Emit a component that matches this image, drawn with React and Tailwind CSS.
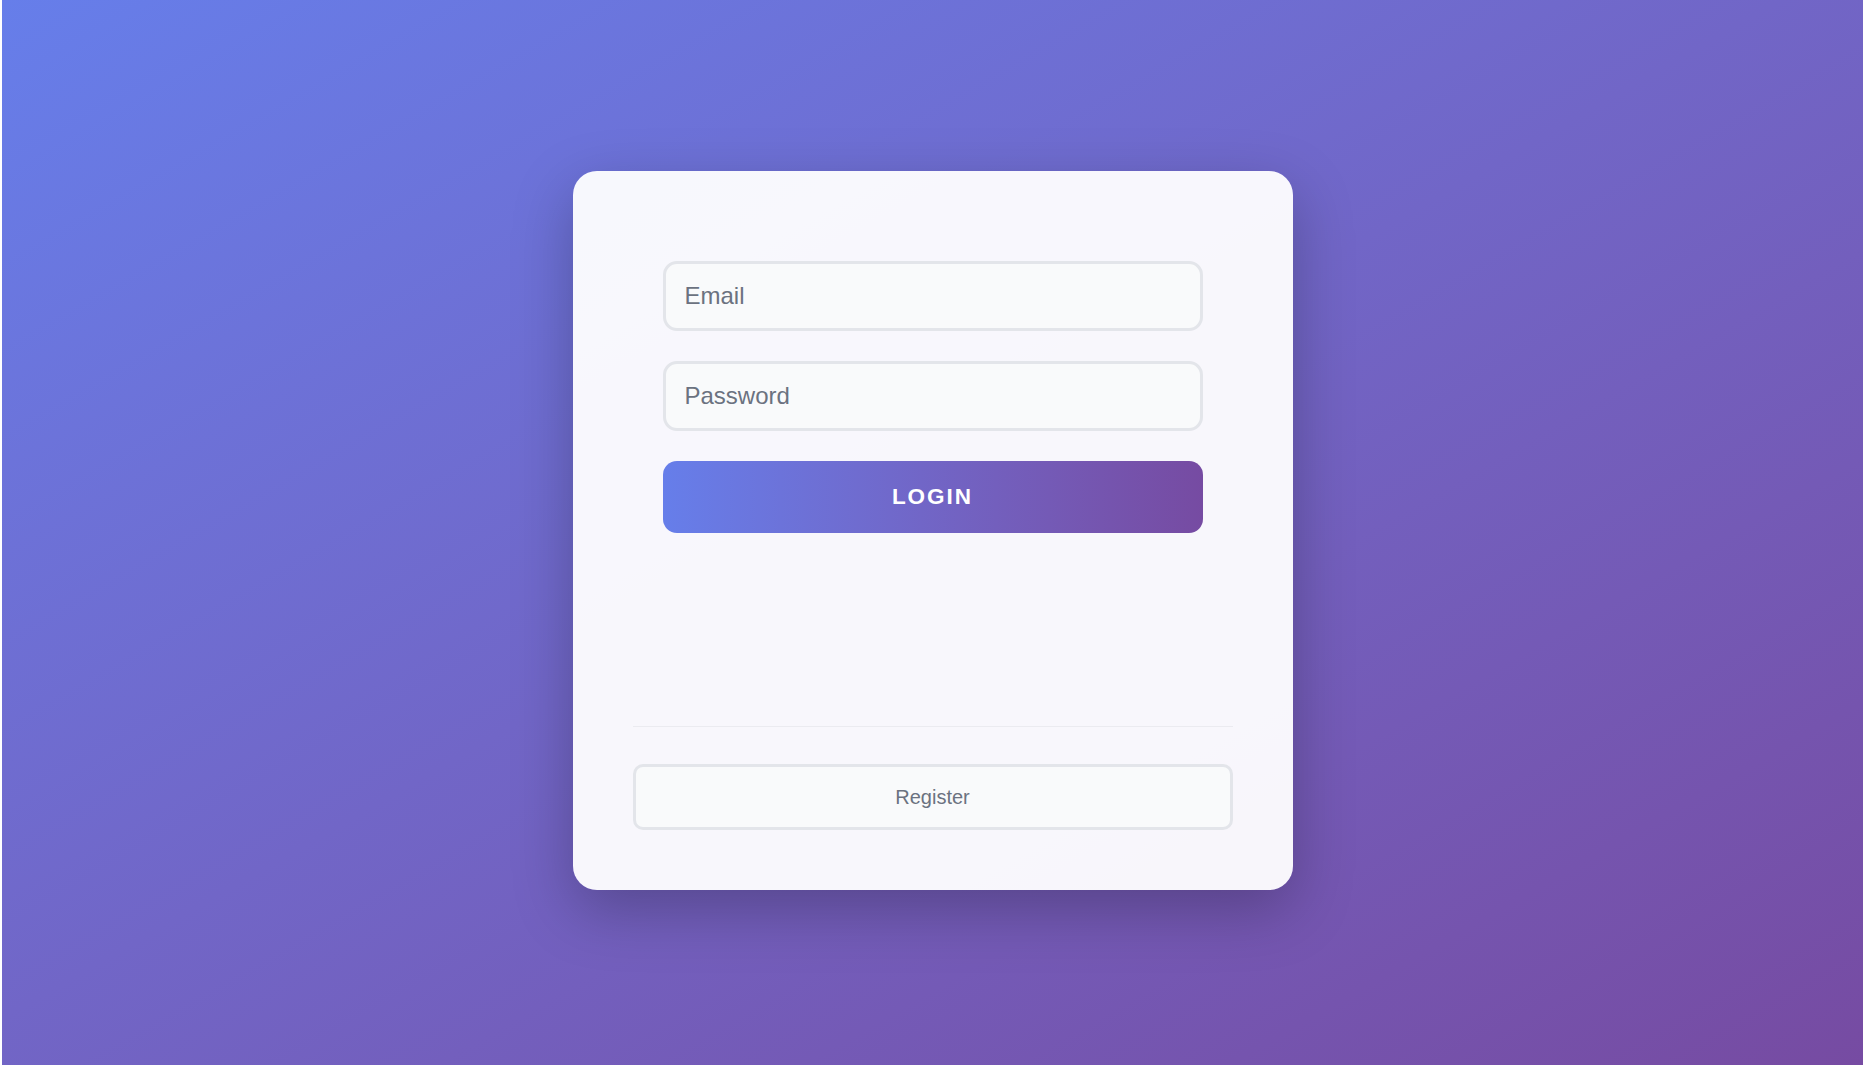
import React, { useState } from "react";

const App = () => {
  const [email, setEmail] = useState("");
  const [password, setPassword] = useState("");

  const handleSubmit = (e) => {
    e.preventDefault();
  };

  return (
    <div className="bg-white pl-[2px] pb-[2px]" style={{ fontFamily: '"Liberation Sans", Arial, sans-serif' }}>
      <div className="min-h-[1065px] pb-[5px] flex items-center justify-center bg-gradient-to-br from-[#667eea] to-[#764ba2]">
        {/* Login card */}
        <div className="w-[720px] p-[60px] rounded-[24px] bg-white/95 shadow-[0_20px_60px_rgba(0,0,0,0.25)]">
          <form onSubmit={handleSubmit} className="p-[30px] flex flex-col gap-[30px]">
            <input
              type="email"
              placeholder="Email"
              value={email}
              onChange={(e) => setEmail(e.target.value)}
              className="h-[70px] w-full px-[19px] rounded-[14px] border-[3px] border-[#e3e5ea] bg-[#f9fafb] text-[24px] text-gray-700 placeholder:text-[#6b7280] outline-none"
            />
            <input
              type="password"
              placeholder="Password"
              value={password}
              onChange={(e) => setPassword(e.target.value)}
              className="h-[70px] w-full px-[19px] rounded-[14px] border-[3px] border-[#e3e5ea] bg-[#f9fafb] text-[24px] text-gray-700 placeholder:text-[#6b7280] outline-none"
            />
            <button
              type="submit"
              className="h-[72px] w-full rounded-[14px] bg-gradient-to-r from-[#667eea] to-[#764ba2] text-white text-[22.5px] font-bold tracking-[2px]"
            >
              LOGIN
            </button>
          </form>

          {/* Register section */}
          <div className="mt-[163px] border-t border-[#ebebf0] pt-[37px]">
            <button
              type="button"
              className="h-[66px] w-full rounded-[10px] border-[3px] border-[#e3e5ea] bg-[#f9fafb] text-[20px] text-[#6b7280]"
            >
              Register
            </button>
          </div>
        </div>
      </div>
    </div>
  );
};

export default App;
